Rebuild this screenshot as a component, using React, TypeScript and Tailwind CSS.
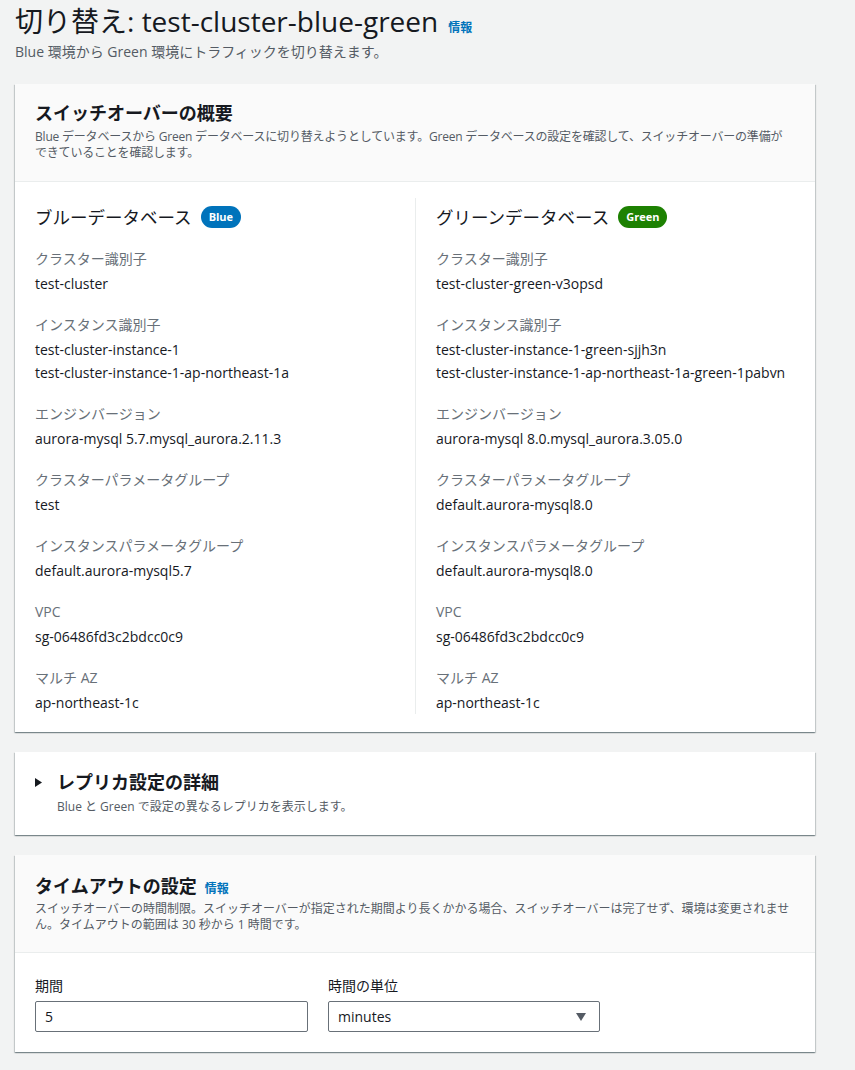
import React from "react";

const FONT = "font-['Open_Sans','Noto_Sans_CJK_JP',sans-serif]";

const CARD =
  "bg-white shadow-[0_1px_1px_0_rgba(0,28,36,0.3),1px_1px_1px_0_rgba(0,28,36,0.15),-1px_1px_1px_0_rgba(0,28,36,0.15)]";

type Field = { label: string; values: string[] };

const blueFields: Field[] = [
  { label: "クラスター識別子", values: ["test-cluster"] },
  {
    label: "インスタンス識別子",
    values: ["test-cluster-instance-1", "test-cluster-instance-1-ap-northeast-1a"],
  },
  { label: "エンジンバージョン", values: ["aurora-mysql 5.7.mysql_aurora.2.11.3"] },
  { label: "クラスターパラメータグループ", values: ["test"] },
  { label: "インスタンスパラメータグループ", values: ["default.aurora-mysql5.7"] },
  { label: "VPC", values: ["sg-06486fd3c2bdcc0c9"] },
  { label: "マルチ AZ", values: ["ap-northeast-1c"] },
];

const greenFields: Field[] = [
  { label: "クラスター識別子", values: ["test-cluster-green-v3opsd"] },
  {
    label: "インスタンス識別子",
    values: [
      "test-cluster-instance-1-green-sjjh3n",
      "test-cluster-instance-1-ap-northeast-1a-green-1pabvn",
    ],
  },
  { label: "エンジンバージョン", values: ["aurora-mysql 8.0.mysql_aurora.3.05.0"] },
  { label: "クラスターパラメータグループ", values: ["default.aurora-mysql8.0"] },
  { label: "インスタンスパラメータグループ", values: ["default.aurora-mysql8.0"] },
  { label: "VPC", values: ["sg-06486fd3c2bdcc0c9"] },
  { label: "マルチ AZ", values: ["ap-northeast-1c"] },
];

function InfoLink() {
  return (
    <span className="text-[12px] font-bold text-[#0073bb] leading-none">情報</span>
  );
}

function DbColumn({
  title,
  badge,
  badgeColor,
  fields,
  divider,
}: {
  title: string;
  badge: string;
  badgeColor: string;
  fields: Field[];
  divider?: boolean;
}) {
  return (
    <div className={divider ? "border-l border-[#eaeded] pl-[20px]" : "pr-[20px]"}>
      <div className="mt-[6px] flex items-center gap-[9px]">
        <h3 className="text-[17.5px] leading-[26px] font-normal text-[#16191f]">{title}</h3>
        <span
          className={`${badgeColor} rounded-full px-[8px] h-[22px] flex items-center text-[11px] font-bold text-white`}
        >
          {badge}
        </span>
      </div>
      <div className="mt-[17px] flex flex-col gap-[18px]">
        {fields.map((f) => (
          <div key={f.label}>
            <div className="text-[14px] leading-[23px] text-[#687078]">{f.label}</div>
            <div className="mt-[2px] text-[14px] leading-[23px] text-[#16191f]">
              {f.values.map((v) => (
                <div key={v}>{v}</div>
              ))}
            </div>
          </div>
        ))}
      </div>
    </div>
  );
}

export default function App() {
  return (
    <div className={`${FONT} min-h-[1070px] bg-[#f2f3f3] px-[15px] pt-[4px] pb-[17px] w-[855px]`}>
      {/* page header */}
      <div className="flex items-baseline gap-[10px]">
        <h1 className="text-[28px] leading-[34px] font-normal text-[#16191f]">
          切り替え: test-cluster-blue-green
        </h1>
        <InfoLink />
      </div>
      <p className="mt-[4px] text-[14px] leading-[20px] text-[#545b64]">
        Blue 環境から Green 環境にトラフィックを切り替えます。
      </p>

      <div className="w-[800px] mt-[22px] flex flex-col gap-[20px]">
        {/* overview */}
        <section className={CARD}>
          <div className="bg-[#fafafa] border-b border-[#eaeded] px-[20px] pt-[18px] pb-[20px]">
            <h2 className="text-[18px] leading-[22px] font-bold text-[#16191f]">
              スイッチオーバーの概要
            </h2>
            <p className="mt-[5px] text-[12px] leading-[16px] tracking-[-0.2px] text-[#545b64]">
              Blue データベースから Green データベースに切り替えようとしています。Green
              データベースの設定を確認して、スイッチオーバーの準備が
              <br />
              できていることを確認します。
            </p>
          </div>
          <div className="px-[20px] pt-[16px] pb-[18px] grid grid-cols-2">
            <DbColumn
              title="ブルーデータベース"
              badge="Blue"
              badgeColor="bg-[#0073bb]"
              fields={blueFields}
            />
            <DbColumn
              title="グリーンデータベース"
              badge="Green"
              badgeColor="bg-[#1d8102]"
              fields={greenFields}
              divider
            />
          </div>
        </section>

        {/* replica details (collapsed) */}
        <section className={`${CARD} px-[20px] pt-[19px] pb-[20px]`}>
          <div className="flex items-center gap-[15px]">
            <svg width="7" height="9" viewBox="0 0 7 9">
              <path d="M0 0 L7 4.5 L0 9 Z" fill="#16191f" />
            </svg>
            <h2 className="text-[18px] leading-[22px] font-bold text-[#16191f]">
              レプリカ設定の詳細
            </h2>
          </div>
          <p className="mt-[6px] pl-[22px] text-[12px] leading-[16px] text-[#545b64]">
            Blue と Green で設定の異なるレプリカを表示します。
          </p>
        </section>

        {/* timeout */}
        <section className={CARD}>
          <div className="bg-[#fafafa] border-b border-[#eaeded] px-[20px] pt-[20px] pb-[19px]">
            <div className="flex items-baseline gap-[8px]">
              <h2 className="text-[18px] leading-[22px] font-bold text-[#16191f]">
                タイムアウトの設定
              </h2>
              <InfoLink />
            </div>
            <p className="mt-[4px] text-[12px] leading-[16px] text-[#545b64]">
              スイッチオーバーの時間制限。スイッチオーバーが指定された期間より長くかかる場合、スイッチオーバーは完了せず、環境は変更されません。タイムアウトの範囲は
              30 秒から 1 時間です。
            </p>
          </div>
          <div className="px-[20px] pt-[22px] pb-[20px] flex gap-[20px]">
            <div className="w-[273px]">
              <div className="text-[14px] leading-[22px] text-[#16191f]">期間</div>
              <div className="mt-[4px] h-[31px] border border-[#687078] rounded-[2px] flex items-center pl-[9px] text-[14px] text-[#16191f]">
                5
              </div>
            </div>
            <div className="w-[272px]">
              <div className="text-[14px] leading-[22px] text-[#16191f]">時間の単位</div>
              <div className="mt-[4px] h-[31px] border border-[#687078] rounded-[2px] flex items-center justify-between pl-[9px] pr-[13px] text-[14px] text-[#16191f]">
                <span>minutes</span>
                <svg width="10" height="8" viewBox="0 0 10 8">
                  <path d="M0 0 L10 0 L5 8 Z" fill="#545b64" />
                </svg>
              </div>
            </div>
          </div>
        </section>
      </div>
    </div>
  );
}
